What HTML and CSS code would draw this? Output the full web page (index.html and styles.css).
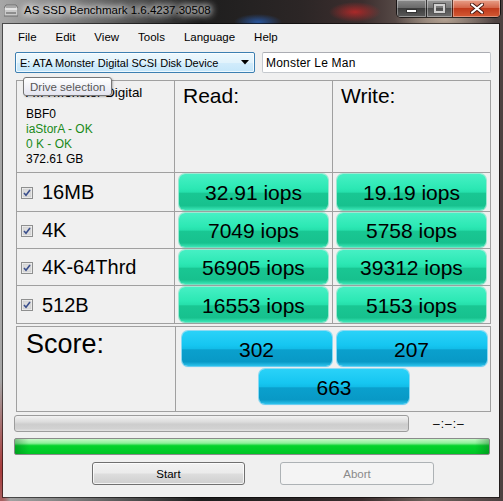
FILE: index.html
```html
<!DOCTYPE html>
<html>
<head>
<meta charset="utf-8">
<link rel="stylesheet" href="styles.css">
</head>
<body>
<div class="window">
  <div class="titlebar">
    <div class="title">
      <svg class="appicon" width="14" height="13" viewBox="0 0 14 13">
        <path d="M2 1h10l2 3v8H0V4z" fill="#c9c9c9" stroke="#6e6e6e" stroke-width="1"/>
        <path d="M1 5h12" stroke="#fff" stroke-width="1"/>
        <path d="M3 2v2M5 2v2M7 2v2M9 2v2M11 2v2" stroke="#7a7a7a" stroke-width="0.8"/>
        <rect x="2" y="8" width="10" height="2" fill="#8d8d8d"/>
      </svg>
      <span class="title-text">AS SSD Benchmark 1.6.4237.30508</span>
    </div>
    <div class="caption">
      <div class="cbtn cmin"><span class="dash"></span></div>
      <div class="cbtn cmax"><span class="sq"></span></div>
      <div class="cbtn cclose">
        <svg width="14" height="11" viewBox="0 0 14 11"><path d="M2 1.5l10 8M12 1.5l-10 8" stroke="#4a1a12" stroke-width="4" stroke-linecap="round"/><path d="M2 1.5l10 8M12 1.5l-10 8" stroke="#fff" stroke-width="2.2" stroke-linecap="round"/></svg>
      </div>
    </div>
  </div>

  <div class="client">
    <nav class="menu">
      <span>File</span><span>Edit</span><span>View</span><span>Tools</span><span>Language</span><span>Help</span>
    </nav>

    <div class="toprow">
      <div class="combo">
        <span>E: ATA Monster Digital SCSI Disk Device</span>
        <svg width="8" height="5" viewBox="0 0 8 5"><path d="M0 0h8L4 4.5z" fill="#000"/></svg>
      </div>
      <div class="textbox">Monster Le Man</div>
    </div>

    <div class="results">
      <div class="cell info">
        <div class="model">ATA Monster Digital</div>
        <div class="line first">BBF0</div>
        <div class="line ok">iaStorA - OK</div>
        <div class="line ok">0 K - OK</div>
        <div class="line">372.61 GB</div>
      </div>
      <div class="cell head">Read:</div>
      <div class="cell head">Write:</div>

      <div class="cell label"><svg class="chk" width="12" height="12" viewBox="0 0 12 12"><rect x="0.5" y="0.5" width="11" height="11" fill="#f4f4f4" stroke="#8e8f8f"/><rect x="2" y="2" width="8" height="8" fill="#dcdcdc" stroke="#c4c4c4" stroke-width="0.5"/><path d="M3 6l2 2.3L9 3" fill="none" stroke="#3b4f8c" stroke-width="1.6"/></svg><span>16MB</span></div>
      <div class="cell val"><div class="pill green">32.91 iops</div></div>
      <div class="cell val"><div class="pill green">19.19 iops</div></div>

      <div class="cell label"><svg class="chk" width="12" height="12" viewBox="0 0 12 12"><rect x="0.5" y="0.5" width="11" height="11" fill="#f4f4f4" stroke="#8e8f8f"/><rect x="2" y="2" width="8" height="8" fill="#dcdcdc" stroke="#c4c4c4" stroke-width="0.5"/><path d="M3 6l2 2.3L9 3" fill="none" stroke="#3b4f8c" stroke-width="1.6"/></svg><span>4K</span></div>
      <div class="cell val"><div class="pill green">7049 iops</div></div>
      <div class="cell val"><div class="pill green">5758 iops</div></div>

      <div class="cell label"><svg class="chk" width="12" height="12" viewBox="0 0 12 12"><rect x="0.5" y="0.5" width="11" height="11" fill="#f4f4f4" stroke="#8e8f8f"/><rect x="2" y="2" width="8" height="8" fill="#dcdcdc" stroke="#c4c4c4" stroke-width="0.5"/><path d="M3 6l2 2.3L9 3" fill="none" stroke="#3b4f8c" stroke-width="1.6"/></svg><span>4K-64Thrd</span></div>
      <div class="cell val"><div class="pill green">56905 iops</div></div>
      <div class="cell val"><div class="pill green">39312 iops</div></div>

      <div class="cell label"><svg class="chk" width="12" height="12" viewBox="0 0 12 12"><rect x="0.5" y="0.5" width="11" height="11" fill="#f4f4f4" stroke="#8e8f8f"/><rect x="2" y="2" width="8" height="8" fill="#dcdcdc" stroke="#c4c4c4" stroke-width="0.5"/><path d="M3 6l2 2.3L9 3" fill="none" stroke="#3b4f8c" stroke-width="1.6"/></svg><span>512B</span></div>
      <div class="cell val"><div class="pill green">16553 iops</div></div>
      <div class="cell val"><div class="pill green">5153 iops</div></div>
    </div>

    <div class="scorebox">
      <div class="cell score-label">Score:</div>
      <div class="cell score-vals">
        <div class="pill blue">302</div>
        <div class="pill blue">207</div>
        <div class="pill blue">663</div>
      </div>
    </div>

    <div class="progress-row">
      <div class="bar gray"></div>
      <span class="time">–:–:–</span>
    </div>
    <div class="bar greenbar"></div>

    <div class="actions">
      <div class="btn">Start</div>
      <div class="btn disabled">Abort</div>
    </div>
  </div>
</div>
<div class="tooltip">Drive selection</div>
</body>
</html>
```

FILE: styles.css
```css
* { box-sizing: border-box; }

html, body {
  margin: 0;
  width: 503px;
  height: 501px;
  overflow: hidden;
}

body {
  position: relative;
  font-family: "Liberation Sans", Arial, sans-serif;
  color: #000;
  background:
    radial-gradient(ellipse 26px 10px at 355px 12px, rgba(190, 40, 40, 0.85), rgba(190, 40, 40, 0) 100%),
    radial-gradient(ellipse 24px 8px at 258px 22px, rgba(40, 90, 170, 0.9), rgba(40, 90, 170, 0) 100%),
    radial-gradient(ellipse 50px 16px at 445px 20px, rgba(210, 190, 170, 0.7), rgba(210, 190, 170, 0) 100%),
    radial-gradient(ellipse 10px 90px at 1px 470px, rgba(170, 30, 30, 0.8), rgba(170, 30, 30, 0) 100%),
    linear-gradient(90deg, #a7a7a7 0, #8a8a8a 10%, #4a4a4a 28%, #1e1e1e 40%, #2c2626 60%, #3c2e2e 72%, #6e625c 85%, #4c4040 100%);
}

.window {
  display: flex;
  flex-direction: column;
  height: 501px;
  padding: 0 4px 4px 3px;
}

/* title bar */
.titlebar {
  height: 24px;
  display: flex;
  justify-content: space-between;
  align-items: flex-start;
}

.title {
  display: flex;
  align-items: center;
  gap: 6px;
  padding: 3px 0 0 1px;
}

.appicon { flex: none; }

.title-text {
  font-size: 11.5px;
  line-height: 14px;
  color: #000;
  text-shadow: 0 0 6px #fff, 0 0 8px #fff, 0 0 10px rgba(255,255,255,0.9);
}

.caption {
  display: flex;
  margin-right: -2px;
  height: 18px;
  border: 1px solid rgba(0, 0, 0, 0.7);
  border-top: none;
  border-radius: 0 0 5px 5px;
  overflow: hidden;
}

.cbtn {
  display: flex;
  align-items: center;
  justify-content: center;
  height: 100%;
  box-shadow: inset 0 0 0 1px rgba(255, 255, 255, 0.35);
}

.cmin {
  width: 29px;
  background: linear-gradient(#8c8c8c, #6a6a6a 45%, #3e3e3e 50%, #5a5a5a);
}

.cmax {
  width: 26px;
  border-left: 1px solid rgba(0, 0, 0, 0.6);
  background: linear-gradient(#9a9a9a, #787878 45%, #505050 50%, #6e6e6e);
}

.cclose {
  width: 48px;
  border-left: 1px solid rgba(0, 0, 0, 0.6);
  background: linear-gradient(#e8a08a, #d4664a 45%, #c03a1c 50%, #d45a34);
}

.dash {
  width: 11px;
  height: 4px;
  margin-top: 4px;
  background: #fff;
  border: 1px solid #333;
}

.sq {
  width: 11px;
  height: 9px;
  border: 2px solid #d0d0d0;
  outline: 1px solid #555;
  background: transparent;
}

/* client */
.client {
  flex: 1;
  background: #f0f0f0;
  box-shadow: 0 0 0 1px rgba(0, 0, 0, 0.55);
}

.menu {
  height: 24px;
  display: flex;
  align-items: center;
  gap: 19px;
  padding: 1px 0 0 15px;
  font-size: 11.5px;
}

.toprow {
  display: flex;
  gap: 7px;
  margin-top: 4px;
  padding-left: 12px;
}

.combo {
  width: 240px;
  height: 21px;
  display: flex;
  align-items: center;
  justify-content: space-between;
  padding: 0 5px 0 4px;
  border: 1px solid #3c7fb1;
  border-radius: 2px;
  background: linear-gradient(#eef8fd, #e2f3fc 50%, #d2ecfb 52%, #c4e6fa);
  box-shadow: inset 0 0 0 1px rgba(255, 255, 255, 0.7);
  font-size: 11px;
}

.textbox {
  width: 229px;
  height: 21px;
  display: flex;
  align-items: center;
  padding-left: 3px;
  border: 1px solid #c5c9ce;
  border-top-color: #abadb3;
  border-radius: 2px;
  background: #fff;
  font-size: 12px;
  letter-spacing: 0.2px;
}

/* results grid */
.results {
  margin: 7px 0 0 13px;
  width: 475px;
  display: grid;
  grid-template-columns: 157px 157px 157px;
  grid-template-rows: 91px 38px 36px 36px 37px;
  gap: 1px;
  background: #a0a0a0;
  border: 1px solid #a0a0a0;
}

.cell {
  background: #f0f0f0;
}

.info {
  padding: 4px 0 0 9px;
  font-size: 12px;
}

.model {
  font-size: 13.4px;
  line-height: 16px;
}

.line {
  line-height: 15px;
}

.line.first { margin-top: 6px; }

.ok { color: #1a8a1a; }

.head {
  font-size: 21px;
  line-height: 24px;
  padding: 3px 0 0 8px;
}

.label {
  display: flex;
  align-items: center;
  gap: 9px;
  padding: 1px 0 0 4px;
  font-size: 20px;
}

.chk { flex: none; }

.val {
  padding: 1px 4px;
}

.pill {
  display: flex;
  align-items: center;
  justify-content: center;
  padding-top: 2px;
  border-radius: 6px;
  font-size: 21px;
  color: #000;
}

.pill.green {
  height: 100%;
  background: linear-gradient(#46f0c4 0%, #2ce8b4 40%, #26e0ac 50%, #19c793 54%, #17c18e 88%, #3ae6b6 100%);
  box-shadow: 0 0 0 1px rgba(60, 225, 175, 0.45), 0 1px 1px rgba(40, 200, 150, 0.4);
}

.scorebox {
  margin: 2px 0 0 13px;
  width: 475px;
  display: grid;
  grid-template-columns: 158px 314px;
  grid-template-rows: 84px;
  gap: 1px;
  background: #a0a0a0;
  border: 1px solid #a0a0a0;
}

.score-label {
  font-size: 27px;
  line-height: 30px;
  padding: 2px 0 0 9px;
}

.score-vals {
  display: flex;
  flex-wrap: wrap;
  justify-content: center;
  align-content: flex-start;
  gap: 3px 5px;
  padding: 4px 3px 0 5px;
}

.pill.blue {
  width: 150px;
  height: 35px;
  background: linear-gradient(#2ad2f8 0%, #16c6f1 40%, #12bde9 50%, #0aa0cd 54%, #0899c6 88%, #2cc2ec 100%);
  box-shadow: 0 0 0 1px rgba(60, 200, 245, 0.55), 0 1px 1px rgba(30, 170, 230, 0.4);
}

/* progress */
.progress-row {
  display: flex;
  align-items: center;
  margin-top: 3px;
  padding-left: 11px;
}

.bar {
  height: 17px;
  border-radius: 3px;
}

.bar.gray {
  width: 395px;
  border: 1px solid #9c9c9c;
  background: linear-gradient(#f2f2f2, #dcdcdc 40%, #cdcdcd 55%, #d2d2d2 85%, #e4e4e4);
}

.time {
  margin-left: 24px;
  font-size: 12px;
  letter-spacing: 1px;
}

.greenbar {
  width: 476px;
  margin: 6px 0 0 11px;
  border: 1px solid #8a8a8a;
  border-radius: 2px;
  background:
    linear-gradient(90deg, rgba(0, 90, 20, 0.35), rgba(0, 90, 20, 0) 14px, rgba(0, 90, 20, 0) calc(100% - 14px), rgba(0, 90, 20, 0.35)),
    linear-gradient(#c8f8c8 0%, #8ef09a 28%, #06d22c 45%, #00cc28 80%, #00c424 100%);
}

/* buttons */
.actions {
  display: flex;
  gap: 35px;
  margin-top: 7px;
  padding-left: 89px;
}

.btn {
  width: 153px;
  height: 23px;
  display: flex;
  align-items: center;
  justify-content: center;
  border: 1px solid #707070;
  border-radius: 3px;
  background: linear-gradient(#f2f2f2, #ebebeb 48%, #dddddd 52%, #cfcfcf);
  box-shadow: inset 0 0 0 1px rgba(255, 255, 255, 0.75);
  font-size: 11.5px;
}

.btn.disabled {
  width: 154px;
  border-color: #adb2b5;
  background: #f4f4f4;
  box-shadow: none;
  color: #8a8a8a;
}

/* tooltip overlay */
.tooltip {
  position: absolute;
  left: 23px;
  top: 77px;
  width: 89px;
  height: 19px;
  display: flex;
  align-items: center;
  padding-left: 6px;
  border: 1px solid #767676;
  border-radius: 3px;
  background: linear-gradient(#ffffff, #e4e5f0);
  box-shadow: 1px 1px 2px rgba(0, 0, 0, 0.25);
  font-size: 11.5px;
  color: #575757;
}
```
